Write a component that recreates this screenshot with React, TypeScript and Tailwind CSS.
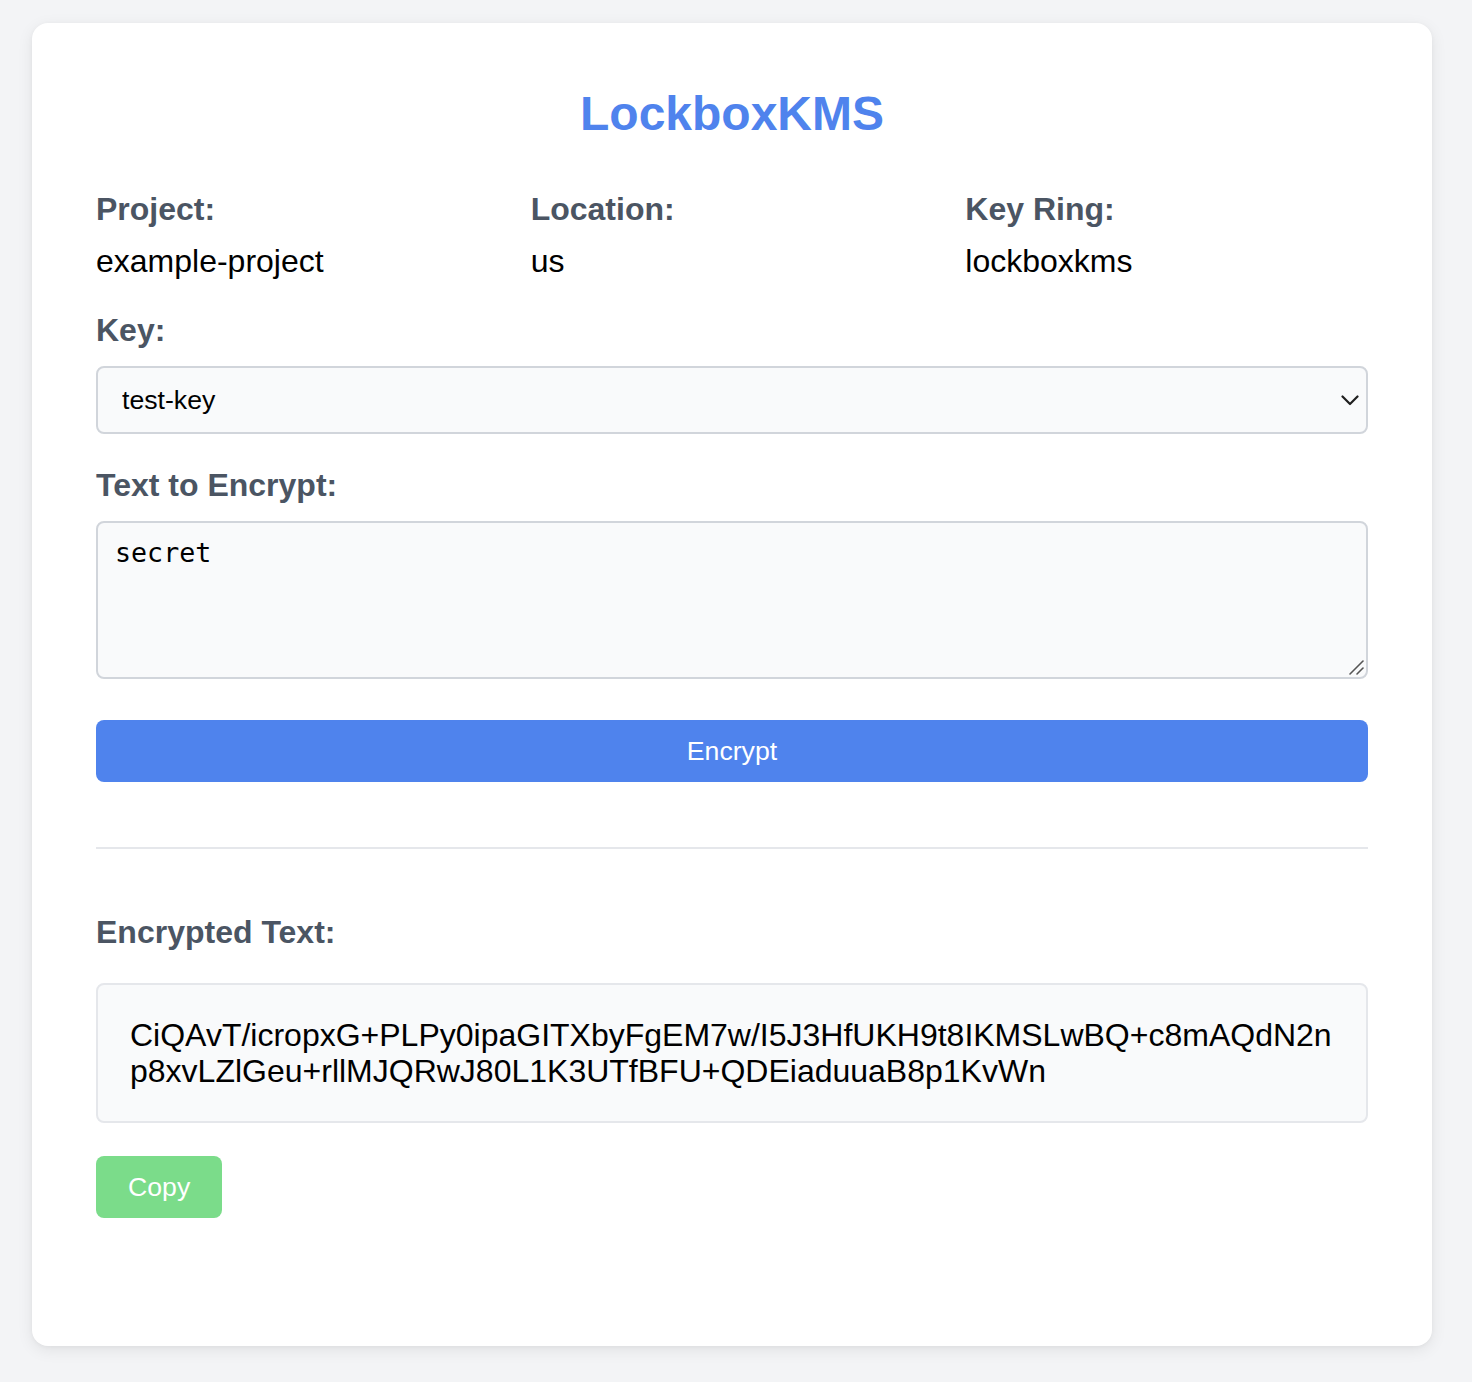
import React from "react";

export default function App() {
  return (
    <div className="min-h-screen bg-[#f3f4f6] pl-[32px] pt-[23px] pb-[36px] font-['Liberation_Sans',Arial,sans-serif]">
      <div className="w-[1400px] bg-white rounded-[16px] shadow-[0_4px_16px_rgba(0,0,0,0.08),0_1px_4px_rgba(0,0,0,0.04)] px-[64px] pt-[67px] pb-[128px]">
        <h1 className="text-center text-[48px] leading-[48px] font-bold text-[#4f83ed] mb-[47px]">
          LockboxKMS
        </h1>

        <div className="grid grid-cols-3 gap-x-[32px] mb-[21px]">
          {[
            ["Project:", "example-project"],
            ["Location:", "us"],
            ["Key Ring:", "lockboxkms"],
          ].map(([label, value]) => (
            <div key={label} className="flex flex-col">
              <div className="text-[32px] leading-[48px] font-bold text-[#4b5563]">{label}</div>
              <div className="mt-[4px] text-[32px] leading-[48px] text-black">{value}</div>
            </div>
          ))}
        </div>

        <div className="text-[32px] leading-[48px] font-bold text-[#4b5563] mb-[12px]">Key:</div>
        <div className="relative mb-[27px]">
          <select
            defaultValue="test-key"
            className="block w-full h-[68px] appearance-none rounded-[8px] border-2 border-[#d1d5db] bg-[#f9fafb] pl-[24px] pr-[48px] text-[26.67px] text-black font-['Liberation_Sans',Arial,sans-serif] outline-none"
          >
            <option value="test-key">test-key</option>
          </select>
          <svg
            className="pointer-events-none absolute right-[9px] top-[29px]"
            width="18"
            height="11"
            viewBox="0 0 18 11"
            fill="none"
          >
            <polyline points="1.5,1.5 9,9 16.5,1.5" stroke="#1f1f1f" strokeWidth="2.2" strokeLinecap="round" strokeLinejoin="round" />
          </svg>
        </div>

        <div className="text-[32px] leading-[48px] font-bold text-[#4b5563] mb-[12px]">Text to Encrypt:</div>
        <div className="relative mb-[41px]">
          <textarea
            defaultValue="secret"
            className="block w-full h-[158px] resize-none rounded-[8px] border-2 border-[#d1d5db] bg-[#f9fafb] px-[17px] pt-[14px] text-[26.67px] leading-[32px] text-black font-['DejaVu_Sans_Mono',monospace] outline-none"
          />
          <svg
            className="pointer-events-none absolute right-[3px] bottom-[3px]"
            width="18"
            height="18"
            viewBox="0 0 18 18"
            fill="none"
          >
            <line x1="3" y1="16" x2="16" y2="3" stroke="#555" strokeWidth="1.6" strokeLinecap="round" />
            <line x1="10" y1="16" x2="16" y2="10" stroke="#555" strokeWidth="1.6" strokeLinecap="round" />
          </svg>
        </div>

        <button className="block w-full h-[62px] rounded-[8px] bg-[#4f83ed] text-white text-[26.67px] font-['Liberation_Sans',Arial,sans-serif]">
          Encrypt
        </button>

        <div className="mt-[65px] h-[2px] bg-[#e5e7eb]" />

        <div className="mt-[59px] text-[32px] leading-[48px] font-bold text-[#4b5563] mb-[27px]">Encrypted Text:</div>
        <div className="rounded-[8px] border-2 border-[#e5e7eb] bg-[#f9fafb] p-[32px] text-[32px] leading-[36px] text-black break-all">
          <div>CiQAvT/icropxG+PLPy0ipaGITXbyFgEM7w/I5J3HfUKH9t8IKMSLwBQ+c8mAQdN2n</div>
          <div>p8xvLZlGeu+rllMJQRwJ80L1K3UTfBFU+QDEiaduuaB8p1KvWn</div>
        </div>

        <button className="mt-[33px] h-[62px] px-[32px] rounded-[8px] bg-[#7bdc8a] text-white text-[26.67px] font-['Liberation_Sans',Arial,sans-serif]">
          Copy
        </button>
      </div>
    </div>
  );
}
